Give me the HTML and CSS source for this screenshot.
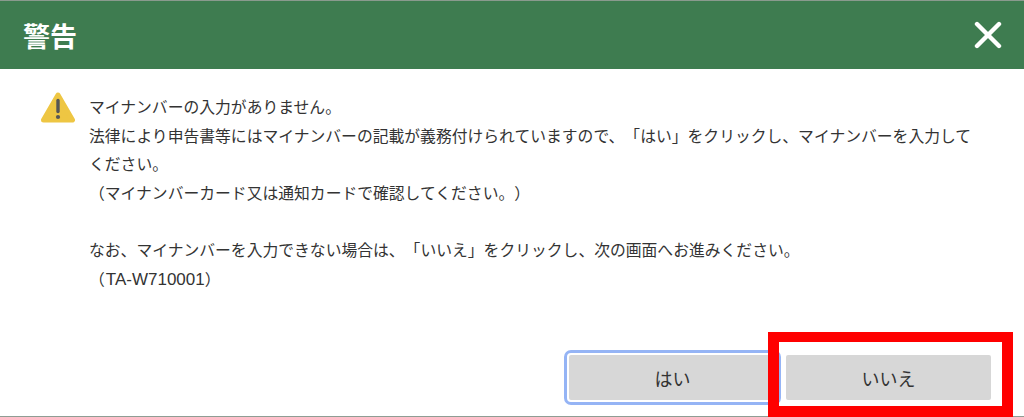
FILE: index.html
```html
<!DOCTYPE html>
<html lang="ja">
<head>
    <meta charset="UTF-8">
    <title>警告</title>
    <link rel="stylesheet" href="styles.css">
</head>
<body>
    <div class="dialog">
        <div class="dialog-header">
            <span class="dialog-title">警告</span>
            <svg class="close-icon" width="28" height="28" viewBox="0 0 28 28" fill="none" stroke="#fff" stroke-width="4.4" stroke-linecap="round">
                <line x1="3" y1="3" x2="25" y2="25"></line>
                <line x1="25" y1="3" x2="3" y2="25"></line>
            </svg>
        </div>
        <div class="dialog-body">
            <svg class="warning-icon" width="34" height="31" viewBox="0 0 34 31">
                <path d="M17 3 L31.5 28 H2.5 Z" fill="#eec643" stroke="#eec643" stroke-width="5" stroke-linejoin="round"></path>
                <path d="M17 8.5 V19.5" stroke="#555" stroke-width="3.4" stroke-linecap="round"></path>
                <circle cx="17" cy="25" r="2.1" fill="#555"></circle>
            </svg>
            <div class="message">
                <p>マイナンバーの入力がありません。</p>
                <p>法律により申告書等にはマイナンバーの記載が義務付けられていますので、「はい」をクリックし、マイナンバーを入力してください。</p>
                <p>（マイナンバーカード又は通知カードで確認してください。）</p>
                <p class="blank">&nbsp;</p>
                <p>なお、マイナンバーを入力できない場合は、「いいえ」をクリックし、次の画面へお進みください。</p>
                <p>（<span class="code">TA-W710001</span>）</p>
            </div>
        </div>
        <div class="dialog-footer">
            <button class="btn btn-focus">はい</button>
            <button class="btn">いいえ</button>
        </div>
        <div class="highlight"></div>
    </div>
</body>
</html>
```

FILE: styles.css
```css
* {
    margin: 0;
    padding: 0;
    box-sizing: border-box;
}

html, body {
    height: 100%;
    overflow: hidden;
}

body {
    background-color: #fff;
    color: #333;
    font-family: "Noto Sans CJK JP", "Noto Sans", sans-serif;
}

.dialog {
    position: relative;
    height: 417px;
    display: flex;
    flex-direction: column;
    border-bottom: 1px solid #8f9d94;
}

.dialog-header {
    height: 69px;
    display: flex;
    align-items: center;
    justify-content: space-between;
    padding: 0 22px 0 23px;
    background-color: #3e7c50;
    border-top: 1px solid #8a9a8e;
    color: #fff;
}

.dialog-title {
    font-size: 27px;
    font-weight: 700;
    line-height: 1;
}

.dialog-body {
    flex: 1;
    display: flex;
    gap: 12px;
    padding: 23px 40px 0 41px;
}

.warning-icon {
    flex: none;
    margin-top: 0;
    width: 34px;
    height: 31px;
}

.message {
    width: 890px;
    margin-left: 2px;
    padding-top: 1px;
    font-size: 15.8px;
    line-height: 28.6px;
    text-spacing-trim: space-all;
}

.code {
    margin-left: 1px;
    font-family: "Liberation Sans", sans-serif;
    font-size: 17px;
    line-height: 1;
}

.dialog-footer {
    display: flex;
    justify-content: flex-end;
    gap: 10px;
    padding: 0 33px 16px 0;
}

.btn {
    width: 205px;
    height: 45px;
    border: none;
    border-radius: 2px;
    background-color: #d7d7d7;
    color: #333;
    font-family: inherit;
    font-size: 18px;
}

.btn-focus {
    width: 207px;
    outline: 3px solid #95b4f5;
    outline-offset: 2px;
    border-radius: 2px;
}

/* red annotation box on top of the screenshot */
.highlight {
    position: absolute;
    left: 768px;
    top: 332px;
    width: 245px;
    height: 85px;
    border: 11px solid #ff0000;
    border-top-width: 10px;
}
```
